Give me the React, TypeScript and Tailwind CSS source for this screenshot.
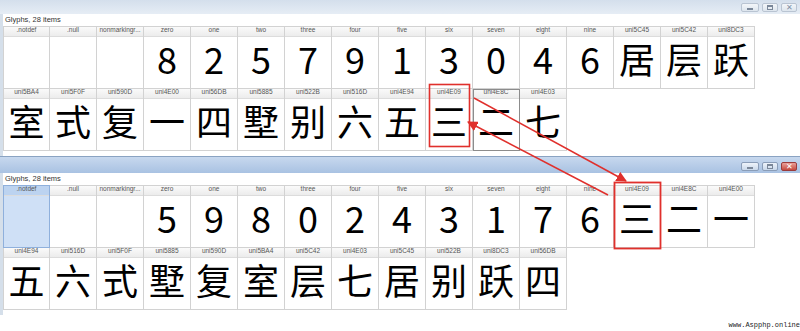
import React from "react";

type Cell = { name: string; ch?: string; selected?: boolean; hover?: boolean };

const cjk = (s?: string) => !!s && /[\u4e00-\u9fff]/.test(s);

const topRows: Cell[][] = [
  [
    { name: ".notdef" },
    { name: ".null" },
    { name: "nonmarkingr..." },
    { name: "zero", ch: "8" },
    { name: "one", ch: "2" },
    { name: "two", ch: "5" },
    { name: "three", ch: "7" },
    { name: "four", ch: "9" },
    { name: "five", ch: "1" },
    { name: "six", ch: "3" },
    { name: "seven", ch: "0" },
    { name: "eight", ch: "4" },
    { name: "nine", ch: "6" },
    { name: "uni5C45", ch: "居" },
    { name: "uni5C42", ch: "层" },
    { name: "uni8DC3", ch: "跃" },
  ],
  [
    { name: "uni5BA4", ch: "室" },
    { name: "uni5F0F", ch: "式" },
    { name: "uni590D", ch: "复" },
    { name: "uni4E00", ch: "一" },
    { name: "uni56DB", ch: "四" },
    { name: "uni5885", ch: "墅" },
    { name: "uni522B", ch: "别" },
    { name: "uni516D", ch: "六" },
    { name: "uni4E94", ch: "五" },
    { name: "uni4E09", ch: "三" },
    { name: "uni4E8C", ch: "二", hover: true },
    { name: "uni4E03", ch: "七" },
  ],
];

const bottomRows: Cell[][] = [
  [
    { name: ".notdef", selected: true },
    { name: ".null" },
    { name: "nonmarkingr..." },
    { name: "zero", ch: "5" },
    { name: "one", ch: "9" },
    { name: "two", ch: "8" },
    { name: "three", ch: "0" },
    { name: "four", ch: "2" },
    { name: "five", ch: "4" },
    { name: "six", ch: "3" },
    { name: "seven", ch: "1" },
    { name: "eight", ch: "7" },
    { name: "nine", ch: "6" },
    { name: "uni4E09", ch: "三" },
    { name: "uni4E8C", ch: "二" },
    { name: "uni4E00", ch: "一" },
  ],
  [
    { name: "uni4E94", ch: "五" },
    { name: "uni516D", ch: "六" },
    { name: "uni5F0F", ch: "式" },
    { name: "uni5885", ch: "墅" },
    { name: "uni590D", ch: "复" },
    { name: "uni5BA4", ch: "室" },
    { name: "uni5C42", ch: "层" },
    { name: "uni4E03", ch: "七" },
    { name: "uni5C45", ch: "居" },
    { name: "uni522B", ch: "别" },
    { name: "uni8DC3", ch: "跃" },
    { name: "uni56DB", ch: "四" },
  ],
];

function GlyphCell({ cell, first, top }: { cell: Cell; first: boolean; top: boolean }) {
  const border = cell.selected ? "border-[#8fb0dc]" : "border-[#d2d2d2]";
  return (
    <div
      className={`w-[47px] flex flex-col border-r border-b ${border} ${first ? "border-l" : ""} ${top ? "border-t" : ""} ${
        cell.hover ? "outline outline-[#8c8c8c] outline-offset-[-1px]" : ""
      }`}
    >
      <div
        className={`h-[10px] flex items-start justify-center text-[6.5px] leading-none text-[#555] border-b border-[#dcdcdc] ${
          cell.selected ? "bg-[#bcd3f0]" : "bg-gradient-to-b from-[#fafafa] to-[#ececec]"
        }`}
        style={{ fontFamily: '"Liberation Sans", Arial, sans-serif' }}
      >
        {cell.name}
      </div>
      <div className={`h-[51px] flex justify-center ${cell.selected ? "bg-[#cfe0f6]" : "bg-white"}`}>
        {cell.ch && (
          <span
            className="text-[36px] leading-none text-black pt-[3px]"
            style={{ fontFamily: '"Noto Sans CJK SC", sans-serif' }}
          >
            {cell.ch}
          </span>
        )}
      </div>
    </div>
  );
}

function TitleButtons({ active }: { active: boolean }) {
  const base = "h-[9px] rounded-[2px] border flex items-center justify-center";
  const plain = active
    ? "border-[#8a9db8] bg-gradient-to-b from-[#eef3fa] to-[#c9d8ea]"
    : "border-[#b9c4d2] bg-gradient-to-b from-[#f3f6f9] to-[#dde5ee]";
  return (
    <div className="flex gap-[3px] pr-[3px]">
      <div className={`${base} ${plain} w-[18px]`}>
        <div className="w-[6px] h-[2px] bg-[#7a8799] mt-[3px]" />
      </div>
      <div className={`${base} ${plain} w-[16px]`}>
        <div className="w-[6px] h-[5px] border border-[#7a8799] border-t-2" />
      </div>
      <div
        className={`${base} w-[16px] ${
          active ? "border-[#9b3b3b] bg-gradient-to-b from-[#e9a09a] to-[#c4473d]" : plain
        }`}
      >
        <span className={`text-[8px] leading-none ${active ? "text-white" : "text-[#8090a4]"}`}>✕</span>
      </div>
    </div>
  );
}

function GlyphWindow({ rows, active }: { rows: Cell[][]; active: boolean }) {
  return (
    <div className="flex flex-col">
      <div
        className={`flex items-center justify-end ${
          active
            ? "h-[17px] pt-[2px] bg-gradient-to-b from-[#c7d8ee] to-[#a9c2e2] border-t border-[#8aa3c2]"
            : "h-[14px] bg-gradient-to-b from-[#d4dfec] to-[#e6edf5]"
        }`}
      >
        <TitleButtons active={active} />
      </div>
      <div className="bg-white border-l-[3px] border-[#d5dfea] pb-[5px]">
        <div
          className="h-[12px] pl-[2px] text-[7.5px] leading-[12px] text-[#333]"
          style={{ fontFamily: '"Liberation Sans", Arial, sans-serif' }}
        >
          Glyphs, 28 items
        </div>
        {rows.map((row, ri) => (
          <div key={ri} className="flex">
            {row.map((c, ci) => (
              <GlyphCell key={c.name + ci} cell={c} first={ci === 0} top={ri === 0} />
            ))}
          </div>
        ))}
      </div>
    </div>
  );
}

export default function App() {
  const red = "#e0302c";
  return (
    <div className="relative w-[800px] h-[331px] overflow-hidden bg-white">
      <div className="h-[156px] border-b border-[#b8c2cd]">
        <GlyphWindow rows={topRows} active={false} />
      </div>
      <GlyphWindow rows={bottomRows} active={true} />

      {/* annotations */}
      <svg className="absolute inset-0 pointer-events-none" width={800} height={331}>
        <defs>
          <marker id="ah" viewBox="0 0 10 10" refX="9" refY="5" markerWidth="7" markerHeight="7" orient="auto-start-reverse">
            <path d="M0 0 L10 5 L0 10 z" fill={red} />
          </marker>
        </defs>
        <rect x={429.5} y={84.5} width={40} height={62} fill="none" stroke={red} strokeWidth={1.6} />
        <rect x={614.5} y={182.5} width={46} height={66} fill="none" stroke={red} strokeWidth={1.8} />
        <line x1={474} y1={98} x2={626} y2={181} stroke={red} strokeWidth={1.5} markerEnd="url(#ah)" />
        <line x1={608} y1={195} x2={468} y2={122} stroke={red} strokeWidth={1.5} markerEnd="url(#ah)" />
      </svg>

      <div
        className="absolute right-0 bottom-[2px] text-[7px] leading-none text-[#222] whitespace-nowrap"
        style={{ fontFamily: '"Liberation Mono", monospace' }}
      >
        www.Aspphp.online
      </div>
    </div>
  );
}
